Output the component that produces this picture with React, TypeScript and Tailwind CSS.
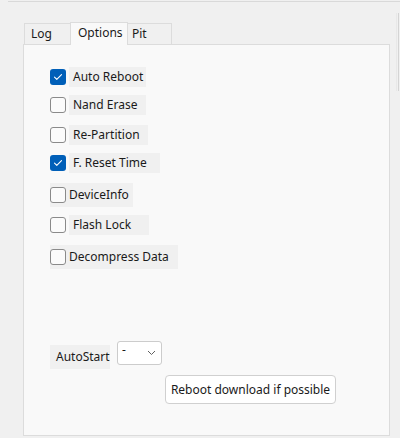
import React from "react";

const font = { fontFamily: '"Segoe UI", "Noto Sans", sans-serif' };

function Box({ checked }: { checked: boolean }) {
  if (checked) {
    return (
      <span className="flex h-4 w-4 shrink-0 items-center justify-center rounded-[3px] bg-[#005fb8]">
        <svg width="10" height="8" viewBox="0 0 10 8" fill="none">
          <path d="M1.5 4.2 L3.8 6.4 L8.5 1.6" stroke="white" strokeWidth="1.1" strokeLinecap="round" strokeLinejoin="round" />
        </svg>
      </span>
    );
  }
  return <span className="block h-4 w-4 shrink-0 rounded-[3px] border border-[#8a8a8a] bg-[#fbfbfb]" />;
}

type Row = {
  label: string;
  checked: boolean;
  mt: string;
  w: string;
  wide?: boolean;
};

const rows: Row[] = [
  { label: "Auto Reboot", checked: true, mt: "mt-[22px]", w: "w-[77px]" },
  { label: "Nand Erase", checked: false, mt: "mt-[8px]", w: "w-[77px]" },
  { label: "Re-Partition", checked: false, mt: "mt-[10px]", w: "w-[79px]" },
  { label: "F. Reset Time", checked: true, mt: "mt-[8px]", w: "w-[91px]" },
  { label: "DeviceInfo", checked: false, mt: "mt-[10px]", w: "w-[83px]", wide: true },
  { label: "Flash Lock", checked: false, mt: "mt-[8px]", w: "w-[80px]" },
  { label: "Decompress Data", checked: false, mt: "mt-[10px]", w: "w-[128px]", wide: true },
];

function OptionRow({ row }: { row: Row }) {
  if (row.wide) {
    return (
      <div className={`${row.mt} flex h-[24px] ${row.w} items-center gap-[3px] bg-[#f0f0f0]`}>
        <Box checked={row.checked} />
        <span>{row.label}</span>
      </div>
    );
  }
  return (
    <div className={`${row.mt} flex h-5 items-center`}>
      <Box checked={row.checked} />
      <span className={`ml-[3px] flex h-5 ${row.w} items-center bg-[#f0f0f0] pl-1`}>{row.label}</span>
    </div>
  );
}

export default function App() {
  return (
    <div className="h-[438px] w-[400px] overflow-hidden bg-[#f0f0f0] text-[12px] text-[#1a1a1a]" style={font}>
      <div className="ml-2 mt-px h-px bg-[#d9d9d9]" />
      <div className="flex">
        <div className="ml-[23px] mt-[20px] flex w-[367px] flex-col">
          <div className="flex h-[22px] items-end pl-px">
            <div className="flex h-[21px] w-[46px] items-center border-l border-t border-[#dcdcdc] bg-[#f0f0f0] pl-[6px]">Log</div>
            <div className="relative z-10 -mb-px flex h-[23px] w-[58px] items-start border-l border-r border-t border-[#dcdcdc] bg-[#f9f9f9] pl-[7px] pt-[1px]">
              Options
            </div>
            <div className="flex h-[21px] w-[44px] items-center border-r border-t border-[#dcdcdc] bg-[#f0f0f0] pl-[4px]">Pit</div>
          </div>
          <div className="flex h-[392px] flex-col border border-[#dcdcdc] bg-[#f9f9f9] pl-[26px]">
            {rows.map((r) => (
              <OptionRow key={r.label} row={r} />
            ))}
            <div className="mt-[72px] flex items-start">
              <div className="mt-[4px] flex h-6 w-[60px] items-center bg-[#f0f0f0] pl-[6px]">AutoStart</div>
              <div className="ml-[7px] flex h-6 w-[45px] justify-between rounded-[3px] border border-[#cccccc] bg-white pl-[4px] pr-[5px]">
                <span className="leading-[16px]">-</span>
                <svg width="9" height="6" viewBox="0 0 9 6" className="mt-[8px]" fill="none">
                  <path d="M1 1 L4.5 4.5 L8 1" stroke="#606060" strokeWidth="1" />
                </svg>
              </div>
            </div>
            <div className="ml-[115px] mt-[6px] flex h-[29px] w-[171px] items-center justify-center rounded-[4px] border border-[#d0d0d0] bg-white">
              Reboot download if possible
            </div>
          </div>
        </div>
        <div className="ml-[6px] mt-[11px] h-[78px] w-[3px] border-l border-r border-l-[#e8e8e8] border-r-[#d4d4d4]" />
      </div>
    </div>
  );
}
